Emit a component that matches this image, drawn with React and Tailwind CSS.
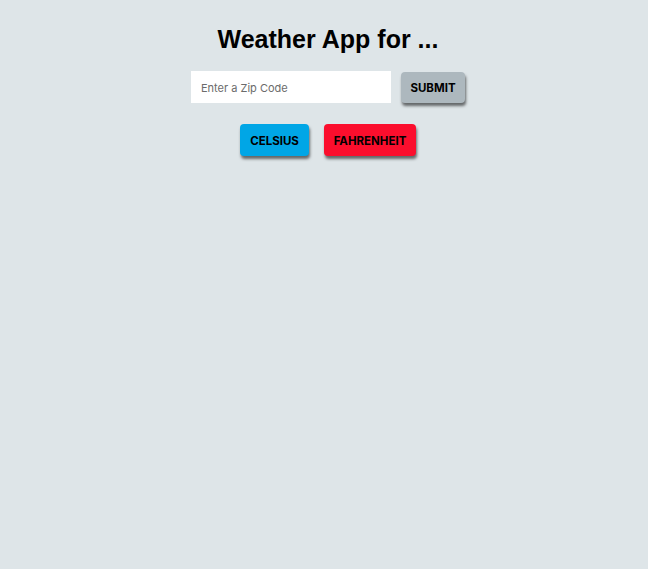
import React, { useState } from "react";

const App = () => {
  const [zip, setZip] = useState("");
  const [unit, setUnit] = useState("F");

  return (
    <div className="min-h-screen w-full bg-[#dee5e8] flex flex-col items-center pt-[23px] pl-[8px] font-['Liberation_Sans',Arial,sans-serif]">
      <h1 className="text-[25px] leading-[32px] font-bold text-black">
        Weather App for ...
      </h1>
      <form
        className="mt-[16px] flex items-center gap-[10px]"
        onSubmit={(e) => e.preventDefault()}
      >
        <input
          type="text"
          value={zip}
          onChange={(e) => setZip(e.target.value)}
          placeholder="Enter a Zip Code"
          className="w-[200px] h-[32px] bg-white px-[10px] pt-[2px] text-[11px] text-gray-700 placeholder:text-[#6b6b6b] outline-none font-['Inter',sans-serif]"
        />
        <button
          type="submit"
          className="w-[64px] h-[31px] pt-[3px] rounded-[4px] bg-[#adb8be] text-[11.5px] font-bold text-black shadow-[1px_3px_3px_rgba(0,0,0,0.55)] font-['Inter',sans-serif]"
        >
          SUBMIT
        </button>
      </form>
      <div className="mt-[21px] flex items-center gap-[15px]">
        <button
          onClick={() => setUnit("C")}
          className="w-[69px] h-[32px] pt-[3px] rounded-[4px] bg-[#00a6e6] text-[11.5px] font-bold text-black shadow-[1px_3px_3px_rgba(0,0,0,0.55)] font-['Inter',sans-serif]"
        >
          CELSIUS
        </button>
        <button
          onClick={() => setUnit("F")}
          className="w-[92px] h-[32px] pt-[3px] rounded-[4px] bg-[#fb0e2d] text-[11.5px] font-bold text-black shadow-[1px_3px_3px_rgba(0,0,0,0.55)] font-['Inter',sans-serif]"
        >
          FAHRENHEIT
        </button>
      </div>
    </div>
  );
};

export default App;
